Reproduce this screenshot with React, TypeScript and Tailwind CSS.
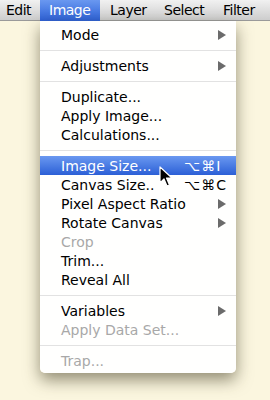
import React from "react";

type Item =
  | { kind: "sep" }
  | { kind: "item"; label: string; sub?: boolean; shortcut?: string; disabled?: boolean; active?: boolean };

const items: Item[] = [
  { kind: "item", label: "Mode", sub: true },
  { kind: "sep" },
  { kind: "item", label: "Adjustments", sub: true },
  { kind: "sep" },
  { kind: "item", label: "Duplicate..." },
  { kind: "item", label: "Apply Image..." },
  { kind: "item", label: "Calculations..." },
  { kind: "sep" },
  { kind: "item", label: "Image Size...", shortcut: "⌥⌘I", active: true },
  { kind: "item", label: "Canvas Size..", shortcut: "⌥⌘C" },
  { kind: "item", label: "Pixel Aspect Ratio", sub: true },
  { kind: "item", label: "Rotate Canvas", sub: true },
  { kind: "item", label: "Crop", disabled: true },
  { kind: "item", label: "Trim..." },
  { kind: "item", label: "Reveal All" },
  { kind: "sep" },
  { kind: "item", label: "Variables", sub: true },
  { kind: "item", label: "Apply Data Set...", disabled: true },
  { kind: "sep" },
  { kind: "item", label: "Trap...", disabled: true },
];

// menu bar titles, width of each slot
const bar = [
  { name: "Edit", w: "w-[40px] pl-[6px]" },
  { name: "Image", w: "w-[60px] pl-[9px]", on: true },
  { name: "Layer", w: "w-[54px] pl-[10px]" },
  { name: "Select", w: "w-[59px] pl-[10px]" },
  { name: "Filter", w: "flex-1 pl-[10px]" },
];

function Arrow() {
  return (
    <svg width="8" height="10" viewBox="0 0 8 10" className="ml-auto mr-[10px]">
      <path d="M0 0 L8 5 L0 10 Z" fill="#6b6b6b" />
    </svg>
  );
}

function Cursor() {
  return (
    <svg width="14" height="22" viewBox="0 0 14 22" className="absolute left-[159px] top-[166px]">
      <path
        d="M1 1 L1 17 L5 13 L8 20 L10.5 19 L7.5 12 L13 12 Z"
        fill="#000"
        stroke="#fff"
        strokeWidth="1.2"
        strokeLinejoin="round"
      />
    </svg>
  );
}

export default function App() {
  return (
    <div
      className="relative w-[270px] h-[400px] overflow-hidden bg-[#fbf6df] text-[14px] text-black"
      style={{ fontFamily: '"DejaVu Sans", "Liberation Sans", sans-serif' }}
    >
      {/* menu bar */}
      <div className="flex h-[21px] bg-gradient-to-b from-[#f1f1f1] to-[#cdcdcd] border-b border-[#9a9a9a] tracking-[-0.5px]">
        {bar.map((b) => (
          <div
            key={b.name}
            className={
              "flex items-center h-[21px] " +
              b.w +
              (b.on ? " bg-gradient-to-b from-[#6a98f0] to-[#2c5fd6] text-white" : "")
            }
          >
            {b.name}
          </div>
        ))}
      </div>

      {/* dropdown */}
      <div className="absolute left-[40px] top-[21px] w-[196px] bg-white/[0.97] rounded-b-[5px] pt-[4px] pb-[3px] shadow-[0_7px_16px_rgba(60,55,30,0.55)]">
        {items.map((it, i) =>
          it.kind === "sep" ? (
            <div key={i} className="h-[12px] flex items-center">
              <div className="h-px w-full bg-[#e2e2e2]" />
            </div>
          ) : (
            <div
              key={i}
              className={
                "h-[19px] flex items-center pl-[21px] leading-none " +
                (it.active
                  ? "bg-gradient-to-b from-[#6a98f0] to-[#2c5fd6] text-white"
                  : it.disabled
                  ? "text-[#a8a8a8]"
                  : "text-black")
              }
            >
              <span className={it.shortcut ? "w-[123px]" : ""}>{it.label}</span>
              {it.shortcut && <span className="tracking-[1px]">{it.shortcut}</span>}
              {it.sub && <Arrow />}
            </div>
          )
        )}
      </div>

      <Cursor />
    </div>
  );
}
